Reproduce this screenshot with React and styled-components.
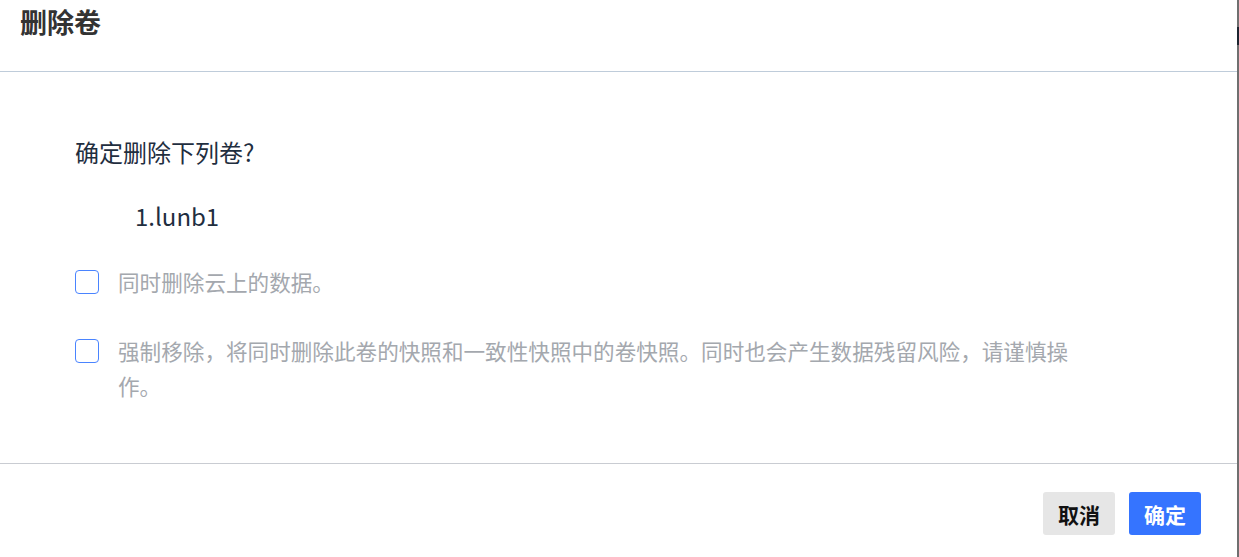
import React from "react";
import styled, { createGlobalStyle } from "styled-components";

const Global = createGlobalStyle`
  html, body { margin: 0; padding: 0; }
  body {
    background: linear-gradient(to bottom, #6f6f6f 0, #6f6f6f 27px, #1c2530 27px, #1c2530 45px, #6f6f6f 45px);
    font-family: "Noto Sans CJK SC", "Noto Sans", sans-serif;
    width: 1239px;
    height: 557px;
    overflow: hidden;
  }
`;

const Dialog = styled.div`
  width: 1237px;
  height: 557px;
  background: #fff;
  display: flex;
  flex-direction: column;
  box-sizing: border-box;
`;

const Header = styled.div`
  height: 72px;
  border-bottom: 1px solid #bfccda;
  padding: 2px 0 0 20px;
  box-sizing: border-box;
`;

const Title = styled.h2`
  margin: 0;
  font-size: 27px;
  line-height: 40px;
  font-weight: 700;
  color: #333;
`;

const Body = styled.div`
  flex: 1;
  padding: 62px 0 0 75px;
  box-sizing: border-box;
  border-bottom: 1px solid #c9ccd2;
`;

const Question = styled.div`
  font-size: 24px;
  line-height: 36px;
  color: #1f2e3f;
`;

const Item = styled.div`
  font-size: 24px;
  line-height: 36px;
  color: #1f2e3f;
  margin: 28px 0 0 60px;
`;

const Options = styled.div`
  display: flex;
  flex-direction: column;
  gap: 38px;
  margin-top: 34px;
  width: 1000px;
`;

const Option = styled.label`
  display: flex;
  align-items: flex-start;
  gap: 19px;
`;

const Box = styled.span`
  flex: none;
  width: 22px;
  height: 22px;
  border: 1.5px solid #4a84ff;
  border-radius: 4px;
  margin-top: 2px;
  background: #fff;
`;

const OptionText = styled.span`
  font-size: 21.6px;
  line-height: 35px;
  margin-top: -4px;
  color: #a4a8ae;
`;

const Footer = styled.div`
  height: 93px;
  display: flex;
  justify-content: flex-end;
  align-items: flex-start;
  gap: 14px;
  padding: 28px 36px 0 0;
  box-sizing: border-box;
`;

const Button = styled.button`
  height: 43px;
  padding: 0 15px;
  border: none;
  border-radius: 3px;
  font-family: "Noto Sans CJK SC", sans-serif;
  font-size: 21px;
  font-weight: 700;
  background: ${(p) => (p.$primary ? "#3574ff" : "#e6e6e6")};
  color: ${(p) => (p.$primary ? "#fff" : "#111")};
  cursor: pointer;
`;

export default function App() {
  return (
    <>
      <Global />
      <Dialog>
        <Header>
          <Title>删除卷</Title>
        </Header>
        <Body>
          <Question>确定删除下列卷?</Question>
          <Item>1.lunb1</Item>
          <Options>
            <Option>
              <Box />
              <OptionText>同时删除云上的数据。</OptionText>
            </Option>
            <Option>
              <Box />
              <OptionText>
                强制移除，将同时删除此卷的快照和一致性快照中的卷快照。同时也会产生数据残留风险，请谨慎操作。
              </OptionText>
            </Option>
          </Options>
        </Body>
        <Footer>
          <Button>取消</Button>
          <Button $primary>确定</Button>
        </Footer>
      </Dialog>
    </>
  );
}
